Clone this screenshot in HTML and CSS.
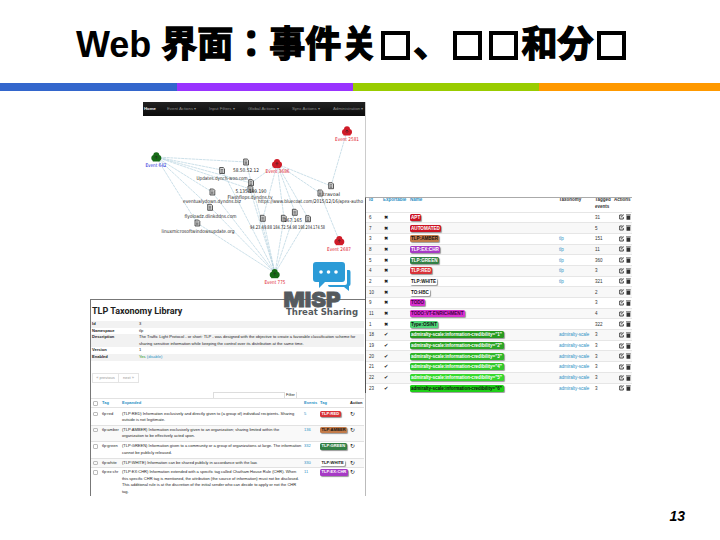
FILE: index.html
```html
<!DOCTYPE html>
<html lang="zh">
<head>
    <meta charset="UTF-8">
    <meta name="viewport" content="width=device-width, initial-scale=1.0">
    <title>Web 界面</title>
    <link rel="stylesheet" href="styles.css">
</head>
<body>
    <div class="slide">
        <h1 class="slide-title" lang="ja">Web <span class="han">界面：事件关<i class="box"></i>、<i class="box"></i><i class="box"></i>和分<i class="box"></i></span></h1>
        <div class="rule"><span class="blue"></span><span class="purple"></span><span class="green"></span><span class="orange"></span></div>

        <div class="shot graph">
            <nav class="nav">
                <b>Home</b><span>Event Actions ▾</span><span>Input Filters ▾</span><span>Global Actions ▾</span><span>Sync Actions ▾</span><span>Administration ▾</span>
            </nav>
            <svg id="graphSvg" class="graph-svg" viewBox="143 116 222 184" width="222" height="184"></svg>
        </div>

        <div class="shot taxonomy">
            <h2>TLP Taxonomy Library</h2>
            <dl class="info">
                <dt>Id</dt><dd>3</dd>
                <dt>Namespace</dt><dd>tlp</dd>
                <dt>Description</dt><dd>The Traffic Light Protocol - or short: TLP - was designed with the objective to create a favorable classification scheme for<br>sharing sensitive information while keeping the control over its distribution at the same time.</dd>
                <dt>Version</dt><dd>1</dd>
                <dt>Enabled</dt><dd><span class="yes">Yes</span> <a>(disable)</a></dd>
            </dl>
            <div class="pager"><span>« previous</span><span>next »</span></div>
            <div class="filter"><span class="filter-input"></span><span class="filter-btn">Filter</span></div>
            <div class="tax-table">
                <div class="tax-row head"><i class="check"></i><a>Tag</a><a>Expanded</a><a>Events</a><a>Tag</a><b>Action</b></div>
                <div class="tax-row r1"><i class="check"></i><span>tlp:red</span><p>(TLP:RED) Information exclusively and directly given to (a group of) individual recipients. Sharing<br>outside is not legitimate.</p><a>5</a><span><em class="tag red">TLP:RED</em></span><span class="act">↻</span></div>
                <div class="tax-row r2"><i class="check"></i><span>tlp:amber</span><p>(TLP:AMBER) Information exclusively given to an organization; sharing limited within the<br>organization to be effectively acted upon.</p><a>136</a><span><em class="tag amber">TLP:AMBER</em></span><span class="act">↻</span></div>
                <div class="tax-row r3"><i class="check"></i><span>tlp:green</span><p>(TLP:GREEN) Information given to a community or a group of organizations at large. The information<br>cannot be publicly released.</p><a>332</a><span><em class="tag dkgreen">TLP:GREEN</em></span><span class="act">↻</span></div>
                <div class="tax-row r4"><i class="check"></i><span>tlp:white</span><p>(TLP:WHITE) Information can be shared publicly in accordance with the law.</p><a>330</a><span><em class="tag white">TLP:WHITE</em></span><span class="act">↻</span></div>
                <div class="tax-row r5"><i class="check"></i><span>tlp:ex:chr</span><p>(TLP:EX:CHR) Information extended with a specific tag called Chatham House Rule (CHR). When<br>this specific CHR tag is mentioned, the attribution (the source of information) must not be disclosed.<br>This additional rule is at the discretion of the initial sender who can decide to apply or not the CHR<br>tag.</p><a>11</a><span><em class="tag violet">TLP:EX:CHR</em></span><span class="act">↻</span></div>
            </div>
        </div>

        <div class="shot tags">
            <div class="tags-row tags-head"><a>Id</a><a>Exportable</a><a>Name</a><b>Taxonomy</b><b>Tagged<br>events</b><b>Actions</b></div>
            <div id="tagRows"></div>
        </div>

        <div class="logo">
            <svg class="bubbles" viewBox="0 0 38 30" width="38" height="30">
                <path fill="#2b9bd7" d="M34 8h2q1.500 0 1.500 2v12q0 2-1.500 2v5l-5-4H17q-2 0-2-2h17q2 0 2-2z"/>
                <path fill="#2b9bd7" d="M3 0h26q3 0 3 3v14q0 3-3 3H12l-6 6v-6H3q-3 0-3-3V3q0-3 3-3z"/>
                <g fill="#fff"><circle cx="8" cy="10" r="1.800"/><circle cx="15.500" cy="10" r="1.800"/><circle cx="23" cy="10" r="1.800"/></g>
            </svg>
            <svg class="logo-text" viewBox="283 290 78 30" width="78" height="30">
                <text class="misp" x="283.500" y="307" textLength="57" lengthAdjust="spacingAndGlyphs">MISP</text>
                <text class="sharing" x="286" y="315" textLength="72" lengthAdjust="spacingAndGlyphs">Threat Sharing</text>
            </svg>
        </div>

        <div class="page-no">13</div>
    </div>
    <script src="script.js"></script>
</body>
</html>
```

FILE: styles.css
```css
* {
    margin: 0;
    padding: 0;
    box-sizing: border-box;
}

body {
    background: #fff;
    font-family: "Liberation Sans", "Noto Sans CJK SC", sans-serif;
}

.slide {
    position: relative;
    width: 720px;
    height: 540px;
    overflow: hidden;
    background: #fff;
}

.slide-title {
    height: 83px;
    padding: 19px 0 0 76px;
    font-family: "Liberation Sans", "Noto Sans CJK JP", sans-serif;
    font-size: 36px;
    line-height: 52px;
    font-weight: bold;
    white-space: nowrap;
}

.han { -webkit-text-stroke: 1.4px #000; }

.box {
    display: inline-block;
    width: 29px;
    height: 29px;
    margin: 0 3px 0 4px;
    border: 4px solid #000;
    vertical-align: -3px;
}

.rule {
    display: grid;
    grid-template-columns: 177px 176px 186px 181px;
    height: 8px;
}

.blue { background: #3366cc; }
.purple { background: #9933ff; }
.green { background: #99cc00; }
.orange { background: #ff9900; }

/* overlapping screenshots on the slide */
.shot {
    position: absolute;
    overflow: hidden;
    background: #fff;
    white-space: nowrap;
}

.shot a { color: #2a8fc4; }

.graph {
    left: 143px;
    top: 102px;
    width: 223px;
    height: 198px;
    border-right: 1px solid #ccc;
}

.nav {
    display: grid;
    grid-template-columns: 23px 42px 39px 44px 41px 32px;
    height: 14px;
    padding-left: 1px;
    background: linear-gradient(#222, #0b0b0b);
    color: #8a8a8a;
    font-size: 4.3px;
    line-height: 14px;
}

.nav b { color: #eee; }

.graph-svg { display: block; }

.edge { stroke: #a9cbda; stroke-width: 0.6; stroke-dasharray: 3 0.6; }
.label {
    font-family: "DejaVu Sans", sans-serif;
    font-size: 5px;
    text-anchor: middle;
    fill: #222;
}
.label.event { fill: #e0202c; }
.label.own { fill: #2525d8; }

.taxonomy {
    left: 90px;
    top: 299px;
    width: 276px;
    height: 197px;
    border: 1px solid #777;
    border-bottom: none;
    border-right-color: #bbb;
    color: #222;
    font-size: 4.02px;
    line-height: 6.6px;
}

.taxonomy h2 {
    height: 21px;
    padding: 5.500px 0 0 1px;
    color: #222;
    font-family: Roboto, sans-serif;
    font-size: 9px;
    line-height: 11px;
}

.info {
    display: grid;
    grid-template-columns: 48px 1fr;
    width: 273px;
    font-size: 4.07px;
}

.info dt { padding-left: 1px; font-weight: bold; }
.info dt:nth-of-type(odd), .info dd:nth-of-type(odd) { background: #f2f2f2; }
.yes { color: #159015; }

.pager {
    display: flex;
    width: 47px;
    height: 10px;
    margin: 12px 0 0 1px;
    border: 1px solid #e4e4e4;
    color: #999;
    font-size: 4px;
    line-height: 8px;
}

.pager span { flex: 1 1 20px; text-align: center; }
.pager span:first-child { flex-basis: 27px; border-right: 1px solid #e4e4e4; }

.filter {
    display: flex;
    height: 6px;
    margin: 9px 0 0 122px;
    line-height: 6px;
}

.filter-input { width: 72px; border: 1px solid #ddd; border-bottom: none; }
.filter-btn { width: 12px; text-align: center; border-right: 1px solid #ddd; }

.tax-row {
    display: grid;
    grid-template-columns: 10px 20px 182px 16px 30px 1fr;
    width: 273px;
    padding: 3px 0 0 1px;
    border-top: 1px solid #e2e2e2;
}

.head { height: 9px; padding-top: 1.5px; font-weight: bold; }
.r1 { height: 18px; }
.r2 { height: 16.500px; padding-top: 1px; background: #f9f9f9; }
.r3 { height: 16.500px; padding-top: 1px; }
.r4 { height: 9.500px; padding-top: 1px; background: #f9f9f9; }
.r5 { height: 29px; padding-top: 1px; }

.check {
    width: 4.500px;
    height: 4.500px;
    margin: 1px 0 0 1px;
    border: 1px solid #bbb;
    border-radius: 1px;
}

.act { font-size: 6px; }

.tag {
    display: inline-block;
    padding: 0 1.500px;
    border-radius: 1.500px;
    box-shadow: 1px 1px 1px #999;
    color: #fff;
    font-style: normal;
    font-weight: bold;
    font-size: 4.1px;
    line-height: 6.5px;
}

.red { background: #d83338; }
.crimson { background: #cc1424; }
.amber { background: #c27b49; color: #111; }
.dkgreen { background: #338045; }
.violet { background: #a63ac5; }
.white { background: #fff; color: #111; }
.magenta { background: #d832ce; color: #440044; }
.mint { background: #50d578; color: #111; }

.tags {
    left: 365px;
    top: 197px;
    width: 267px;
    height: 196px;
    border-left: 1px solid #555;
    border-top: 1px solid #aaa;
    color: #333;
    font-size: 4.5px;
}

.tags-row {
    display: grid;
    grid-template-columns: 14px 27px 149px 36px 24px 1fr;
    align-items: center;
    height: 10.7px;
    padding-left: 3px;
    border-top: 0.5px solid #e6e6e6;
    line-height: 7px;
}

.tags-row:nth-child(even) { background: #f8f8f8; }

.tags-head {
    grid-template-columns: 14px 27px 149px 36px 19px 1fr;
    align-items: start;
    height: 13.5px;
    border-top: none;
    font-size: 4.5px;
    font-weight: bold;
}

.tags-head > * { margin-top: -2px; }

.tags-row .tag { font-size: 4.6px; line-height: 7px; padding: 0 1px; }
.tags-row.wide .tag { width: 94px; font-size: 4.6px; letter-spacing: -0.05px; }

.mark { padding-left: 1px; font-family: "DejaVu Sans", sans-serif; font-weight: bold; color: #222; font-size: 5.2px; }
.actions { display: block; width: 14px; height: 6px; margin-left: 0; }

.logo {
    position: absolute;
    left: 283px;
    top: 262px;
    width: 78px;
}

.bubbles { display: block; margin-left: 30px; }
.logo-text { display: block; margin-top: -2px; overflow: visible; }
.misp { font: 900 20.5px Inter, sans-serif; fill: #555a5e; stroke: #555a5e; stroke-width: 0.8; }
.sharing { font: bold 8px "DejaVu Sans", sans-serif; fill: #555a5e; }

.page-no {
    position: absolute;
    right: 35px;
    bottom: 16px;
    font-size: 14px;
    line-height: 16px;
    font-weight: bold;
    font-style: italic;
}
```

FILE: script.js
```js
const green = [156, 157];
const red = [277, 164];
const bottom = [275, 273];

const edges = [
    [green, [246, 162]], [green, [222, 170]], [green, [251, 183]], [green, [250, 189]],
    [green, [212, 192]], [green, [210, 207]], [green, [197, 223]],
    [red, [251, 183]], [red, [331, 186]], [red, [320, 193]], [red, [263, 218]],
    [red, [284, 218]], [red, [295, 212]], [red, [308, 218]],
    [[347, 131], [331, 186]], [[320, 193], [339, 240]],
    [bottom, [222, 170]], [bottom, [246, 162]], [bottom, [250, 189]], [bottom, [212, 192]],
    [bottom, [210, 207]], [bottom, [197, 223]], [bottom, [263, 218]],
    [bottom, [284, 218]], [bottom, [295, 212]], [bottom, [308, 218]]
];

const docs = [
    [246, 162], [222, 170.5], [251, 182.7], [250.3, 189], [212.3, 192], [320.3, 193], [331, 185.7],
    [210, 207.3], [197.3, 223], [262.7, 218.3], [283.7, 218.3], [294.7, 212.3], [308, 218.7]
];

const events = [
    [156.3, 157, '#176b17'], [277, 163.6, '#cf1b28'], [347, 131, '#cf1b28'],
    [274.7, 273.7, '#176b17'], [339.3, 240.7, '#cf1b28']
];

// text, centre x, baseline y, width, class
const labels = [
    ['Event 642', 156, 167, 21, 'own'],
    ['Event 3686', 277.5, 173, 24, 'event'],
    ['Event 2581', 347, 141, 24, 'event'],
    ['Event 775', 275, 284, 21, 'event'],
    ['Event 2687', 339, 250.5, 24, 'event'],
    ['58.50.52.12', 246, 172, 26, ''],
    ['Updates.dynch-woo.com', 222, 180, 51, ''],
    ['5.135.199.190', 251, 192.5, 31, ''],
    ['Flashflops.dyndns.tv', 250, 199, 45, ''],
    ['eventualydown.dyndns.biz', 212, 202.5, 58, ''],
    ['travoal', 331.5, 195.5, 17, ''],
    ['https://www.bluecoat.com/2015/12/16/apex-autho', 310.5, 202.5, 105, ''],
    ['flyoloadz.dlinkddns.com', 210.5, 217.5, 52, ''],
    ['linuxmicrosoftwindowsupdate.org', 198, 233, 73, ''],
    ['94.23.49.88', 261, 228.5, 22, ''],
    ['184.72.54.98', 285, 228.5, 24, ''],
    ['167.165', 293, 221.5, 18, ''],
    ['198.204.174.58', 311.5, 228.5, 27, '']
];

let svg = edges.map(([a, b]) => `<line class="edge" x1="${a[0]}" y1="${a[1]}" x2="${b[0]}" y2="${b[1]}"/>`).join('');
svg += docs.map(([x, y]) => `
    <g transform="translate(${x} ${y})">
        <path d="M-2.300-3h3.500l1.300 1.300v4.700h-4.800z" fill="#ddd" stroke="#333" stroke-width="0.8"/>
        <path d="M-1.300-1h2.500M-1.300 0.400h2.500M-1.300 1.700h2.500" stroke="#333" stroke-width="0.6"/>
    </g>`).join('');
svg += events.map(([x, y, color]) => `
    <g transform="translate(${x} ${y})">
        <g fill="${color}"><circle cy="-1.700" r="3"/><circle cx="-2" cy="1" r="3"/><circle cx="2" cy="1" r="3"/><path d="M-3.500 1h7v3.500h-7z"/></g>
        <path d="M-1.500 0.500l1.500-1.500 1.500 1.500M0-1v3" fill="none" stroke="#222" stroke-opacity="0.7" stroke-width="0.7"/>
    </g>`).join('');
svg += labels.map(([text, x, y, w, cls]) =>
    `<text class="label ${cls}" x="${x}" y="${y}" textLength="${w}" lengthAdjust="spacingAndGlyphs">${text}</text>`).join('');
document.getElementById('graphSvg').innerHTML = svg;

// id, exportable, name, class, taxonomy, events
const tags = [
    ['6', 0, 'APT', 'crimson', '', '31'],
    ['7', 0, 'AUTOMATED', 'crimson', '', '5'],
    ['3', 0, 'TLP:AMBER', 'amber', 'tlp', '151'],
    ['8', 0, 'TLP:EX:CHR', 'violet', 'tlp', '11'],
    ['5', 0, 'TLP:GREEN', 'dkgreen', 'tlp', '360'],
    ['4', 0, 'TLP:RED', 'red', 'tlp', '3'],
    ['2', 0, 'TLP:WHITE', 'white', 'tlp', '321'],
    ['10', 0, 'TO:HBC', 'white', '', '2'],
    ['9', 0, 'TODO', 'magenta', '', '3'],
    ['11', 0, 'TODO:VT-ENRICHMENT', 'magenta', '', '4'],
    ['1', 0, 'Type:OSINT', 'mint', '', '322'],
    ['18', 1, '1', '#279b20', 'admiralty-scale', '3'],
    ['19', 1, '2', '#2ca526', 'admiralty-scale', '3'],
    ['20', 1, '3', '#2fb728', 'admiralty-scale', '3'],
    ['21', 1, '4', '#32c92a', 'admiralty-scale', '3'],
    ['22', 1, '5', '#36d92d', 'admiralty-scale', '3'],
    ['23', 1, '6', '#1fcf18', 'admiralty-scale', '3']
];

document.getElementById('tagRows').innerHTML = tags.map(([id, exp, name, cls, tax, count]) => {
    const scale = cls[0] === '#';
    const tag = scale
        ? `<em class="tag" style="background: ${cls}; color: ${id === '23' ? '#111' : '#fff'}">admiralty-scale:information-credibility="${name}"</em>`
        : `<em class="tag ${cls}">${name}</em>`;
    return `
        <div class="tags-row ${scale ? 'wide' : ''}">
            <span>${id}</span><span class="mark">${exp ? '✔' : '✖'}</span><span>${tag}</span><a>${tax}</a><span>${count}</span>
            <svg class="actions" viewBox="0 0 14 6">
                <path d="M3.500 1H0.700v4h3.600V3M2 3.300L4.800 0.600" fill="none" stroke="#333" stroke-width="0.9"/>
                <path d="M7.500 1.700h3.800v4H7.500zM7 0.500h4.800v0.800H7z" fill="#333"/>
            </svg>
        </div>`;
}).join('');
```
